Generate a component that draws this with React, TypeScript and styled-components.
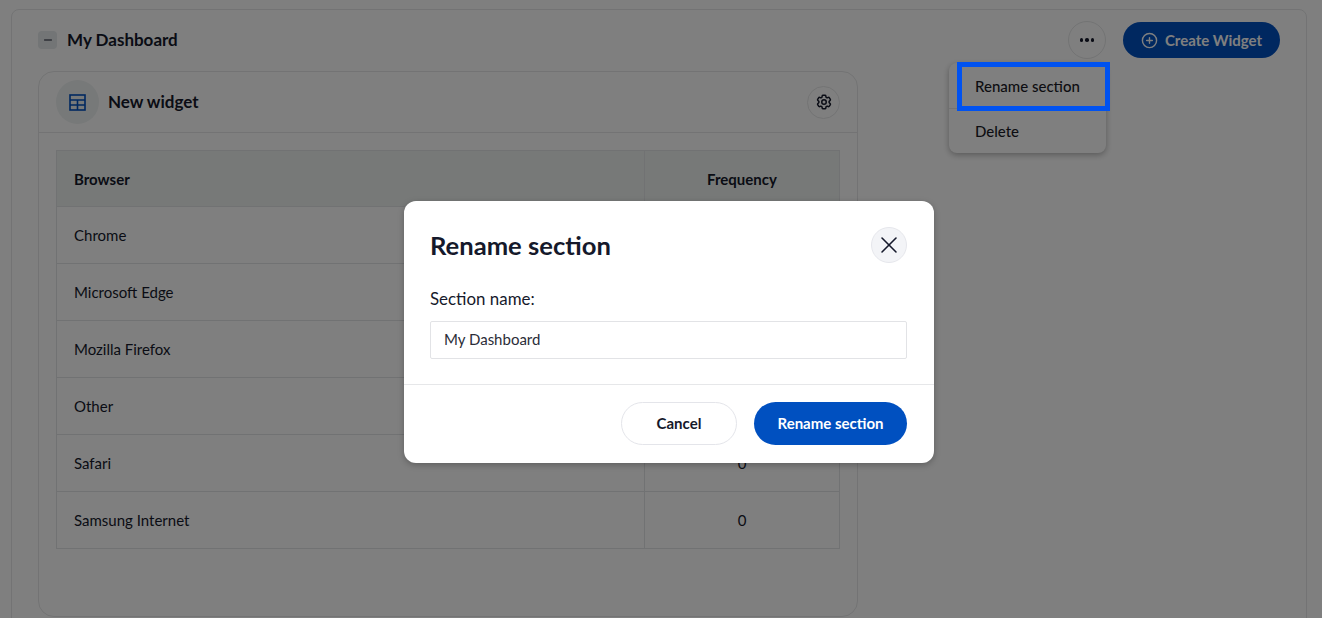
import React from 'react'
import styled, { createGlobalStyle } from 'styled-components'
import { CirclePlus, Minus, X } from 'lucide-react'
import { HiOutlineCog6Tooth } from 'react-icons/hi2'

const GlobalStyle = createGlobalStyle`
  html, body {
    margin: 0;
    padding: 0;
    height: 618px;
    overflow: hidden;
    background: #fff;
    font-family: Lato, "Liberation Sans", sans-serif;
    color: #15192b;
  }
  * { box-sizing: border-box; }
`

const rows = ['Chrome', 'Microsoft Edge', 'Mozilla Firefox', 'Other', 'Safari', 'Samsung Internet']

const Page = styled.div`
  position: relative;
  height: 618px;
  overflow: hidden;
  padding: 9px 15px 0 11px;
`
const Section = styled.section`
  border: 1px solid #e6e7e8;
  border-radius: 8px;
  height: 640px;
  padding: 12px 26px 0;
`
const SectionHeader = styled.header`
  display: flex;
  align-items: center;
  height: 36px;
  margin-bottom: 13px;
`
const Collapse = styled.button`
  width: 19px;
  height: 18px;
  padding: 0;
  margin-right: 10px;
  border: none;
  border-radius: 4px;
  background: #e6eaec;
  color: #15192b;
  display: flex;
  align-items: center;
  justify-content: center;
`
const SectionTitle = styled.h2`
  margin: 0 0 2px;
  font-size: 17px;
  font-weight: 700;
  flex: 1;
`
const MenuAnchor = styled.div`
  position: relative;
  margin-right: 17px;
`
const RoundButton = styled.button<{ $size: number }>`
  width: ${p => p.$size}px;
  height: ${p => p.$size}px;
  padding: 0;
  border: 1px solid #e6e7e8;
  border-radius: 50%;
  background: #fff;
  color: #15192b;
  display: flex;
  align-items: center;
  justify-content: center;
  gap: 2px;
`
const Dot = styled.span`
  width: 3.5px;
  height: 3.5px;
  border-radius: 50%;
  background: #15192b;
`
const CreateButton = styled.button`
  height: 36px;
  width: 157px;
  border: none;
  border-radius: 18px;
  background: #0050c0;
  color: #fff;
  font: 700 15px Lato, sans-serif;
  display: flex;
  align-items: center;
  justify-content: center;
  gap: 7px;
`
const Menu = styled.ul`
  position: absolute;
  top: 42px;
  left: -119px;
  width: 157px;
  margin: 0;
  padding: 0;
  list-style: none;
  background: #fff;
  border-radius: 8px;
  box-shadow: 0 2px 6px rgba(0, 0, 0, 0.3);
`
const MenuItem = styled.li`
  height: 45px;
  padding-left: 26px;
  display: flex;
  align-items: center;
  font-size: 15px;
  font-weight: 500;
  color: #1b1b26;
  & + & { border-top: 1px solid #e6e7e8; }
`
const Widget = styled.article`
  width: 820px;
  height: 546px;
  border: 1px solid #e6e7e8;
  border-radius: 16px;
`
const WidgetHeader = styled.header`
  display: flex;
  align-items: center;
  height: 61px;
  padding: 0 17px;
  border-bottom: 1px solid #e6e7e8;
`
const IconBadge = styled.span`
  width: 43px;
  height: 44px;
  margin-right: 9px;
  border-radius: 50%;
  background: #eef2f2;
  display: flex;
  align-items: center;
  justify-content: center;
`
const WidgetTitle = styled.h3`
  margin: 0 0 2px;
  font-size: 17px;
  font-weight: 700;
  flex: 1;
`
const TableWrap = styled.div`
  padding: 17px 17px 0;
`
const Table = styled.table`
  width: 783px;
  border-collapse: collapse;
  table-layout: fixed;
  font-size: 15px;
`
const HeadCell = styled.th<{ $center?: boolean }>`
  height: 56px;
  padding: 0 17px;
  border: 1px solid #e2e4e6;
  background: #eff3f0;
  font-size: 15px;
  font-weight: 700;
  text-align: ${p => (p.$center ? 'center' : 'left')};
`
const Cell = styled.td<{ $center?: boolean }>`
  height: 57px;
  padding: 0 17px;
  border: 1px solid #e2e4e6;
  text-align: ${p => (p.$center ? 'center' : 'left')};
`
const Overlay = styled.div`
  position: absolute;
  inset: 0;
  background: rgba(0, 0, 0, 0.5);
`
const FocusBox = styled.div`
  position: absolute;
  left: 957px;
  top: 62px;
  width: 153px;
  height: 49px;
  border: 5px solid #0052f0;
`
const Dialog = styled.div`
  position: absolute;
  left: 404px;
  top: 201px;
  width: 530px;
  height: 262px;
  background: #fff;
  border-radius: 12px;
  box-shadow: 0 2px 6px rgba(0, 0, 0, 0.25);
`
const DialogBody = styled.div`
  height: 184px;
  padding: 26px 27px 0 26px;
  border-bottom: 1px solid #e6e7e9;
`
const DialogHeader = styled.div`
  display: flex;
  align-items: flex-start;
  justify-content: space-between;
  height: 62px;
`
const DialogTitle = styled.h2`
  margin: -1px 0 0;
  font-size: 25.6px;
  line-height: 38px;
  font-weight: 700;
  color: #15192b;
`
const CloseButton = styled.button`
  width: 36px;
  height: 36px;
  padding: 0;
  border: 1px solid #e6e7ec;
  border-radius: 50%;
  background: #f3f4f7;
  color: #15192b;
  display: flex;
  align-items: center;
  justify-content: center;
`
const FieldLabel = styled.label`
  display: block;
  font-size: 16.9px;
  line-height: 20px;
  margin-bottom: 12px;
`
const TextInput = styled.input`
  display: block;
  width: 477px;
  height: 38px;
  padding: 0 13px 2px;
  border: 1px solid #e2e3e6;
  border-radius: 2px;
  font: 400 15px Lato, sans-serif;
  color: #2b2d38;
  outline: none;
`
const DialogFooter = styled.div`
  display: flex;
  justify-content: flex-end;
  gap: 17px;
  padding: 17px 27px 0;
`
const CancelButton = styled.button`
  width: 116px;
  height: 43px;
  padding: 0 0 2px;
  border: 1px solid #e4e5ea;
  border-radius: 22px;
  background: #fff;
  color: #15192b;
  font: 700 15px Lato, sans-serif;
`
const PrimaryButton = styled.button`
  width: 153px;
  height: 43px;
  padding: 0 0 2px;
  border: none;
  border-radius: 22px;
  background: #0050c0;
  color: #fff;
  font: 700 15px Lato, sans-serif;
`

const TableIcon = () => (
  <svg width="17" height="17" viewBox="0 0 17 17" fill="none" stroke="#0050c0" strokeWidth="1.6">
    <rect x="1" y="1" width="15" height="15" />
    <path d="M1 6h15M1 11h15M8.5 6v10" />
  </svg>
)

const App = () => {
  return (
    <Page>
      <GlobalStyle />
      <Section>
        <SectionHeader>
          <Collapse><Minus size={12} strokeWidth={2} /></Collapse>
          <SectionTitle>My Dashboard</SectionTitle>
          <MenuAnchor>
            <RoundButton $size={38}><Dot /><Dot /><Dot /></RoundButton>
            <Menu>
              <MenuItem>Rename section</MenuItem>
              <MenuItem>Delete</MenuItem>
            </Menu>
          </MenuAnchor>
          <CreateButton><CirclePlus size={17} strokeWidth={2} />Create Widget</CreateButton>
        </SectionHeader>
        <Widget>
          <WidgetHeader>
            <IconBadge><TableIcon /></IconBadge>
            <WidgetTitle>New widget</WidgetTitle>
            <RoundButton $size={33}><HiOutlineCog6Tooth size={18} strokeWidth={2} /></RoundButton>
          </WidgetHeader>
          <TableWrap>
            <Table>
              <colgroup>
                <col width="588" />
                <col width="195" />
              </colgroup>
              <thead>
                <tr>
                  <HeadCell>Browser</HeadCell>
                  <HeadCell $center>Frequency</HeadCell>
                </tr>
              </thead>
              <tbody>
                {rows.map(name => (
                  <tr key={name}>
                    <Cell>{name}</Cell>
                    <Cell $center>0</Cell>
                  </tr>
                ))}
              </tbody>
            </Table>
          </TableWrap>
        </Widget>
      </Section>
      <Overlay />
      <FocusBox />
      <Dialog>
        <DialogBody>
          <DialogHeader>
            <DialogTitle>Rename section</DialogTitle>
            <CloseButton><X size={28} strokeWidth={1.3} /></CloseButton>
          </DialogHeader>
          <FieldLabel htmlFor="section-name">Section name:</FieldLabel>
          <TextInput id="section-name" defaultValue="My Dashboard" />
        </DialogBody>
        <DialogFooter>
          <CancelButton>Cancel</CancelButton>
          <PrimaryButton>Rename section</PrimaryButton>
        </DialogFooter>
      </Dialog>
    </Page>
  )
}

export default App
